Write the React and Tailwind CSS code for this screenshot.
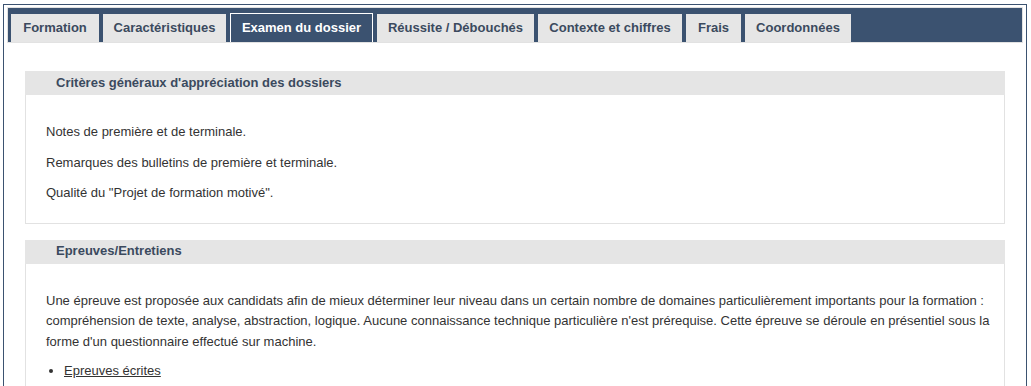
import React from "react";

const tabs = [
  { label: "Formation", w: "w-[88px]" },
  { label: "Caractéristiques", w: "w-[123px]" },
  { label: "Examen du dossier", w: "w-[143px]" },
  { label: "Réussite / Débouchés", w: "w-[157px]" },
  { label: "Contexte et chiffres", w: "w-[144px]" },
  { label: "Frais", w: "w-[55px]" },
  { label: "Coordonnées", w: "w-[106px]" },
];

const Section = ({ title, children, bodyClass }) => (
  <div className="mb-[16px]">
    <div className="h-[24px] bg-[#e5e5e5] pl-[31px] flex items-center font-bold text-[13px] text-[#3b4a5e]">
      {title}
    </div>
    <div className={"border border-t-0 border-[#e2e2e2] pl-[20px] pr-[14px] pt-[27px] " + bodyClass}>
      {children}
    </div>
  </div>
);

export default function App() {
  const active = "Examen du dossier";

  return (
    <div
      className="ml-[3px] mt-[4px] w-[1024px] h-[400px] border border-[#3b5270] bg-white px-[3px] pt-[2px] overflow-hidden"
      style={{ fontFamily: '"Liberation Sans", Arial, sans-serif' }}
    >
      {/* Tab bar */}
      <div className="border border-[#e2e2e2] bg-[#3b5270] h-[36px] flex items-end gap-[4px] pl-[3px]">
        {tabs.map((t) =>
          t.label === active ? (
            <div
              key={t.label}
              className={t.w + " h-[29px] flex items-center justify-center whitespace-nowrap border border-b-0 border-white bg-[#3b5270] text-white font-bold text-[13px]"}
            >
              {t.label}
            </div>
          ) : (
            <div
              key={t.label}
              className={t.w + " h-[28px] flex items-center justify-center whitespace-nowrap bg-[#e6e6e6] text-[#3b4a5e] font-bold text-[13px]"}
            >
              {t.label}
            </div>
          )
        )}
      </div>

      {/* Content */}
      <div className="px-[18px] pt-[28px] text-[13px] text-[#333] leading-[20.5px]">
        <Section title="Critères généraux d'appréciation des dossiers" bodyClass="pb-[19px]">
          <p className="mb-[10px]">Notes de première et de terminale.</p>
          <p className="mb-[10px]">Remarques des bulletins de première et terminale.</p>
          <p>Qualité du "Projet de formation motivé".</p>
        </Section>

        <Section title="Epreuves/Entretiens" bodyClass="pb-[20px]">
          <p className="mb-[9px]">
            Une épreuve est proposée aux candidats afin de mieux déterminer leur niveau dans un certain nombre de
            domaines particulièrement importants pour la formation : compréhension de texte, analyse, abstraction,
            logique. Aucune connaissance technique particulière n'est prérequise. Cette épreuve se déroule en
            présentiel sous la forme d'un questionnaire effectué sur machine.
          </p>
          <ul className="list-disc pl-[18px]">
            <li>
              <span className="underline">Epreuves écrites</span>
            </li>
          </ul>
        </Section>
      </div>
    </div>
  );
}
